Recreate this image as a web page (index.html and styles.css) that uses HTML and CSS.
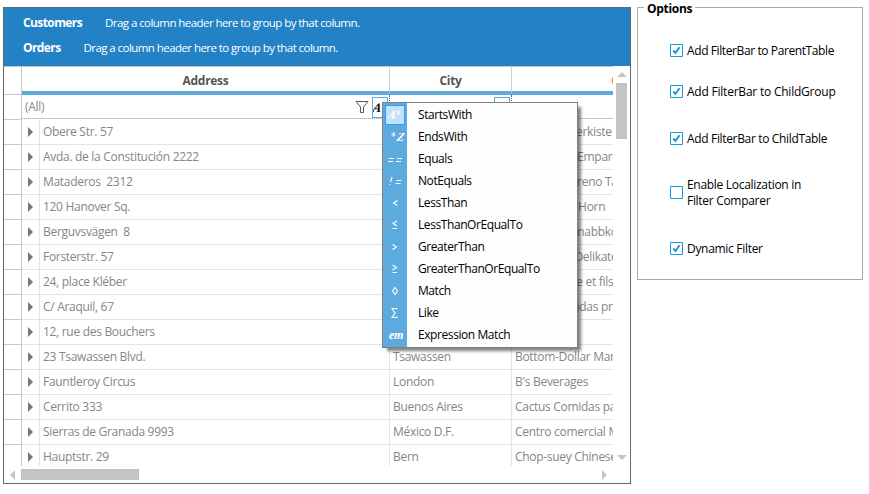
FILE: index.html
```
<!DOCTYPE html>
<html lang="en">
<head>
<meta charset="utf-8">
<title>Filter bar</title>
<link rel="stylesheet" href="styles.css">
</head>
<body>
<main class="app">
  <section class="grid-panel">
    <div class="group-area">
      <div class="group-line"><b>Customers</b><span class="hint">Drag a column header here to group by that column.</span></div>
      <div class="group-line"><b>Orders</b><span class="hint">Drag a column header here to group by that column.</span></div>
    </div>
    <div class="body">
      <div class="table" id="table">
        <div class="row head"><div class="gutter"></div><div class="th address">Address</div><div class="th city">City</div><div class="th company">CompanyName</div></div>
        <div class="row filter"><div class="gutter"></div>
          <div class="fcell address"><span class="all">(All)</span>
            <svg class="funnel" width="14" height="14" viewBox="0 0 14 14"><path d="M1 1.500H13L8.500 7V12.500H5.500V7Z" fill="#fff" stroke="#555566"/></svg>
            <span class="op"><span class="glyph">A</span></span></div>
          <div class="fcell city"><span class="op"></span></div>
          <div class="fcell company"></div>
        </div>
      </div>
      <div class="vscroll"><i class="up"></i><i class="vthumb"></i><i class="down"></i></div>
    </div>
    <div class="hscroll"><i class="left"></i><i class="hthumb"></i><i class="right"></i></div>
    <div class="menu">
      <div class="item selected"><span class="ico script"><span class="glyph">A</span><svg class="star" width="5" height="5" viewBox="0 0 5 5"><path d="M2.500 0V5M.3 1.200L4.700 3.800M4.700 1.200L.3 3.800"/></svg></span><span class="label">StartsWith</span></div>
      <div class="item"><span class="ico script z"><svg class="star" width="5" height="5" viewBox="0 0 5 5"><path d="M2.500 0V5M.3 1.200L4.700 3.800M4.700 1.200L.3 3.800"/></svg><span class="glyph">Z</span></span><span class="label">EndsWith</span></div>
      <div class="item"><span class="ico"><svg width="18" height="12" viewBox="0 0 18 12"><path d="M3 5.500h5M2 8.500h5M11 5.500h5M10 8.500h5"/></svg></span><span class="label">Equals</span></div>
      <div class="item"><span class="ico"><svg width="18" height="12" viewBox="0 0 18 12"><path d="M6 2L4.500 7M4 9L3.600 10M10.500 5.500h5M9.500 8.500h5"/></svg></span><span class="label">NotEquals</span></div>
      <div class="item"><span class="ico"><svg width="18" height="12" viewBox="0 0 18 12"><path d="M11.500 3.500L7.500 6L11.500 8.500"/></svg></span><span class="label">LessThan</span></div>
      <div class="item"><span class="ico"><svg width="18" height="12" viewBox="0 0 18 12"><path d="M11 2L7 4.500L11 7M6.500 9.500H11"/></svg></span><span class="label">LessThanOrEqualTo</span></div>
      <div class="item"><span class="ico"><svg width="18" height="12" viewBox="0 0 18 12"><path d="M6.500 3.500L10.500 6L6.500 8.500"/></svg></span><span class="label">GreaterThan</span></div>
      <div class="item"><span class="ico"><svg width="18" height="12" viewBox="0 0 18 12"><path d="M6.500 2L10.500 4.500L6.500 7M6.500 9.500H11"/></svg></span><span class="label">GreaterThanOrEqualTo</span></div>
      <div class="item"><span class="ico"><svg width="18" height="12" viewBox="0 0 18 12"><path d="M9 2.500L11.500 6L9 9.500L6.500 6Z" stroke-width=".8"/></svg></span><span class="label">Match</span></div>
      <div class="item"><span class="ico"><svg width="18" height="12" viewBox="0 0 18 12"><path d="M11 2.500V1.500H6L9 6L6 10.500H11V9.500"/></svg></span><span class="label">Like</span></div>
      <div class="item"><span class="ico script em">em</span><span class="label">Expression Match</span></div>
    </div>
  </section>
  <fieldset class="options">
    <legend>Options</legend>
    <label class="opt"><svg class="box" viewBox="0 0 13 13"><path class="frame" d="M.5 .5H12.500V12.500H.5Z"/><path class="tick" d="M3.300 6.500L5.500 9L9.500 3.200"/></svg>Add FilterBar to ParentTable</label>
    <label class="opt o2"><svg class="box" viewBox="0 0 13 13"><path class="frame" d="M.5 .5H12.500V12.500H.5Z"/><path class="tick" d="M3.300 6.500L5.500 9L9.500 3.200"/></svg>Add FilterBar to ChildGroup</label>
    <label class="opt o3"><svg class="box" viewBox="0 0 13 13"><path class="frame" d="M.5 .5H12.500V12.500H.5Z"/><path class="tick" d="M3.300 6.500L5.500 9L9.500 3.200"/></svg>Add FilterBar to ChildTable</label>
    <label class="opt o4"><svg class="box" viewBox="0 0 13 13"><path class="frame" d="M.5 .5H12.500V12.500H.5Z"/></svg><span>Enable Localization in<br>Filter Comparer</span></label>
    <label class="opt o5"><svg class="box" viewBox="0 0 13 13"><path class="frame" d="M.5 .5H12.500V12.500H.5Z"/><path class="tick" d="M3.300 6.500L5.500 9L9.500 3.200"/></svg>Dynamic Filter</label>
  </fieldset>
</main>
<script src="app.js"></script>
</body>
</html>
```
FILE: styles.css
```
* { box-sizing: border-box; }
body { margin: 0; background: #fff; font: 12px/16px "Open Sans", "Noto Sans", sans-serif; letter-spacing: -.3px; color: #000; }
.app { display: flex; align-items: flex-start; width: 869px; height: 494px; padding-left: 3px; overflow: hidden; }
.grid-panel { position: relative; width: 628px; height: 477px; margin-top: 7px; border: 1px solid #666; flex: none; }
.group-area { height: 58px; background: #2382c5; color: #fff; padding: 2px 0 0 19px; }
.group-line { display: flex; height: 25px; line-height: 26px; }
.group-line b { letter-spacing: -.6px; }
.hint { margin-left: 23px; font-size: 11.5px; letter-spacing: -.56px; }
.body { display: flex; height: 400px; }
.table { width: 609px; height: 400px; overflow: hidden; }
.row { display: flex; width: 760px; height: 25px; }
.gutter { width: 18px; border-right: 1px solid #c8c8c8; border-bottom: 1px solid #c8c8c8; flex: none; }
.address { width: 368px; flex: none; }
.city { width: 122px; flex: none; }
.company { width: 252px; flex: none; }
.head { height: 29px; border-top: 1px solid #c8c8c8; }
.th { height: 28px; line-height: 27px; border-right: 1px solid #d0d0d0; border-bottom: 4px solid #5caade; text-align: center; font-weight: 700; color: #555; }
.th.company { text-align: left; padding-left: 99px; color: #e59a3c; }
.fcell { display: flex; align-items: center; height: 24px; background: repeating-linear-gradient(90deg, #8fafca 0 1px, #dbe6ef 1px 2px) 0 100% / 100% 1px no-repeat; border-right: 1px dotted #555; color: #868686; }
.all { margin: 0 auto 0 3px; }
.funnel { margin: 0 3px 0 0; }
.op { width: 16px; height: 21px; border: 1px solid #5caade; margin-right: 1px; font: italic 700 13px/19px "Liberation Serif", serif; color: #111; overflow: hidden; }
.city .op { margin-left: auto; }
.glyph { display: inline-block; transform: skewX(-12deg); }
.expander { display: flex; align-items: center; width: 18px; padding-left: 6px; border-right: 1px solid #e4e4e4; border-bottom: 1px solid #e4e4e4; flex: none; }
.expander::before { content: ""; border: 5px solid transparent; border-left: 5px solid #777; border-right: 0; }
.td { line-height: 24px; color: #868686; border-right: 1px solid #e4e4e4; border-bottom: 1px solid #e4e4e4; padding-left: 3px; white-space: nowrap; overflow: hidden; }
.td.address { width: 350px; }
.vscroll { display: flex; flex-direction: column; align-items: center; width: 17px; padding-top: 6px; }
.up { border: 5px solid transparent; border-top: 0; border-bottom-color: #c4c4c4; }
.vthumb { width: 11px; height: 56px; margin-top: 6px; background: #c4c4c4; }
.down { margin-top: 316px; border: 5px solid transparent; border-bottom: 0; border-top-color: #c4c4c4; }
.hscroll { display: flex; align-items: center; height: 17px; padding-left: 6px; }
.left { border: 5px solid transparent; border-left: 0; border-right-color: #c4c4c4; }
.hthumb { width: 118px; height: 11px; margin-left: 6px; background: #c4c4c4; }
.right { margin-left: 463px; border: 5px solid transparent; border-right: 0; border-left-color: #c4c4c4; }
.menu { position: absolute; left: 378px; top: 94px; width: 196px; height: 246px; padding-top: 1px; border: 1px solid #808080; background: linear-gradient(90deg, #5caade 24px, #fdfdfd 24px); box-shadow: 4px 4px 3px -1px rgba(0,0,0,.5); letter-spacing: -.42px; }
.item { display: flex; align-items: center; height: 22px; }
.ico { display: flex; align-items: center; justify-content: center; width: 20px; height: 20px; margin-left: 2px; color: #fff; }
.ico path { fill: none; stroke: #fff; stroke-width: 1.1; }
.selected .ico { background: #c5e0fa; border: 1px solid #3399ff; }
.script { font: italic 700 12px/14px "Liberation Serif", serif; }
.star { margin: 0 1px 6px; }
.star path { stroke-width: .8; }
.z { padding-left: 4px; }
.em { padding-left: 2px; }
.label { margin: 0 0 0 13px; }
.options { position: relative; display: flex; flex-direction: column; width: 226px; height: 280px; margin: 0 0 0 6px; padding: 21px 0 0 32px; border: 1px solid #aaa; }
.options legend { margin-left: -26px; padding: 0 3px; font-weight: 700; line-height: 17px; height: 14px; }
.opt { display: flex; align-items: center; height: 32px; gap: 4px; letter-spacing: -.4px; }
.o2 { margin-top: 9px; letter-spacing: -.22px; }
.o3 { margin-top: 15px; letter-spacing: -.34px; }
.o4 { margin-top: 22px; letter-spacing: -.3px; }
.o5 { margin-top: 24px; letter-spacing: -.3px; }
.box { width: 13px; height: 13px; margin-bottom: 1px; flex: none; fill: none; stroke: #169bd8; }
.tick { stroke-width: 2; }
```
FILE: app.js
```
const rows = [
  ["Obere Str. 57", "Berlin", "Alfreds Futterkiste"],
  ["Avda. de la Constitución 2222", "México D.F.", "Ana Trujillo Emparedados y helados"],
  ["Mataderos  2312", "México D.F.", "Antonio Moreno Taquería"],
  ["120 Hanover Sq.", "London", "Around the Horn"],
  ["Berguvsvägen  8", "Luleå", "Berglunds snabbköp"],
  ["Forsterstr. 57", "Mannheim", "Blauer See Delikatessen"],
  ["24, place Kléber", "Strasbourg", "Blondel père et fils"],
  ["C/ Araquil, 67", "Madrid", "Bólido Comidas preparadas"],
  ["12, rue des Bouchers", "Marseille", "Bon app'"],
  ["23 Tsawassen Blvd.", "Tsawassen", "Bottom-Dollar Markets"],
  ["Fauntleroy Circus", "London", "B's Beverages"],
  ["Cerrito 333", "Buenos Aires", "Cactus Comidas para llevar"],
  ["Sierras de Granada 9993", "México D.F.", "Centro comercial Moctezuma"],
  ["Hauptstr. 29", "Bern", "Chop-suey Chinese"]
];
const table = document.getElementById("table");
for (const [address, city, company] of rows) {
  const row = document.createElement("div");
  row.className = "row";
  row.innerHTML = '<div class="gutter"></div><div class="expander"></div>';
  [["address", address], ["city", city], ["company", company]].forEach(([name, text]) => {
    const cell = document.createElement("div");
    cell.className = "td " + name;
    cell.textContent = text.replace("  ", " \u00a0");
    row.append(cell);
  });
  table.append(row);
}
```
